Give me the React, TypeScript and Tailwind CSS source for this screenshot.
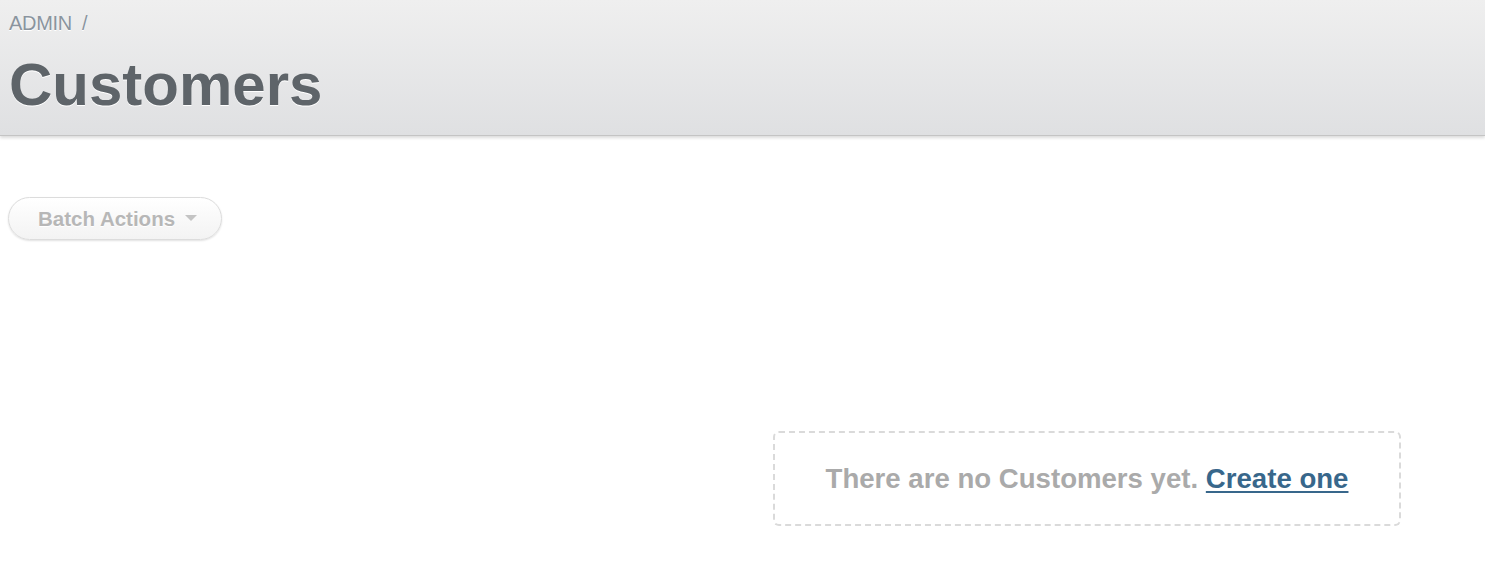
import React from "react";

const App = () => {
  return (
    <div className="min-h-[577px] w-full bg-white font-['Liberation_Sans',Arial,sans-serif]">
      {/* TITLE BAR */}
      <div className="h-[136px] border-b border-[#c4c4c4] bg-gradient-to-b from-[#efefef] to-[#dfe0e2] px-[9px] pt-[10px] shadow-[0_2px_3px_rgba(0,0,0,0.14)]">
        <div className="flex items-center gap-[10px] text-[20px] leading-[26px] text-[#8a949e] [text-shadow:0_1px_0_#fff]">
          <span className="tracking-[-0.3px]">ADMIN</span>
          <span>/</span>
        </div>
        <h2 className="mt-[17px] text-[60px] font-bold leading-[64px] text-[#5e6469] [text-shadow:0_1px_0_#fff]">
          Customers
        </h2>
      </div>

      {/* BATCH ACTIONS */}
      <div className="px-[8px] pt-[61px]">
        <button
          disabled
          className="flex h-[43px] w-[214px] items-center gap-[10px] rounded-full border border-[#dcdcdc] bg-gradient-to-b from-white to-[#f3f3f3] pl-[29px] pt-[2px] text-[20.5px] font-bold text-[#b7b7b7] shadow-[0_1px_2px_rgba(0,0,0,0.12)] [text-shadow:0_1px_0_#fff]"
        >
          <span>Batch Actions</span>
          <svg width="12" height="7" viewBox="0 0 12 7" className="-mt-[2px]">
            <path d="M0 0 L12 0 L6 6 Z" fill="#c4c4c4" />
          </svg>
        </button>
      </div>

      {/* BLANK SLATE */}
      <div className="flex justify-end pr-[84px] pt-[191px]">
        <div className="flex h-[95px] w-[628px] items-center justify-center rounded-[6px] border-2 border-dashed border-[#dadada] text-[27.6px] font-bold text-[#aaaaaa]">
          <span>
            There are no Customers yet.{" "}
            <a href="#" className="text-[#38678b] underline underline-offset-[3px]">
              Create one
            </a>
          </span>
        </div>
      </div>
    </div>
  );
};

export default App;
